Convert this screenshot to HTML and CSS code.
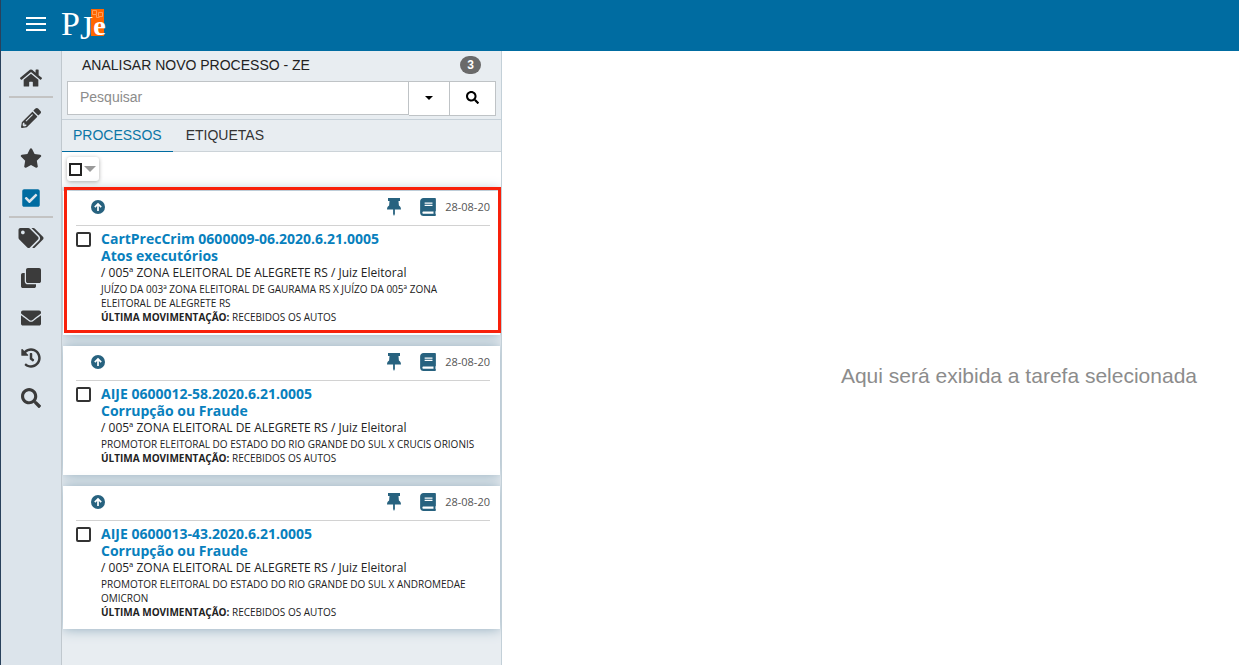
FILE: index.html
```html
<!DOCTYPE html>
<html lang="pt-BR">
<head>
<meta charset="utf-8">
<title>PJe</title>
<link rel="stylesheet" href="styles.css">
</head>
<body>
<svg class="sprite" aria-hidden="true">
  <symbol id="i-home" viewBox="0 0 576 512"><path d="M280.37 148.26L96 300.11V464a16 16 0 0 0 16 16l112.06-.29a16 16 0 0 0 15.92-16V368a16 16 0 0 1 16-16h64a16 16 0 0 1 16 16v95.64a16 16 0 0 0 16 16.05L464 480a16 16 0 0 0 16-16V300L295.67 148.26a12.19 12.19 0 0 0-15.3 0zM571.6 251.47L488 182.56V44.05a12 12 0 0 0-12-12h-56a12 12 0 0 0-12 12v72.61L318.47 43a48 48 0 0 0-61 0L4.34 251.47a12 12 0 0 0-1.6 16.9l25.5 31A12 12 0 0 0 45.15 301l235.22-193.74a12.19 12.19 0 0 1 15.3 0L530.9 301a12 12 0 0 0 16.9-1.6l25.5-31a12 12 0 0 0-1.7-16.93z"/></symbol>
  <symbol id="i-pencil" viewBox="0 0 512 512"><path d="M497.9 142.1l-46.1 46.1c-4.7 4.7-12.3 4.7-17 0l-111-111c-4.7-4.7-4.7-12.3 0-17l46.1-46.1c18.7-18.7 49.1-18.7 67.9 0l60.1 60.1c18.8 18.7 18.8 49.1 0 67.9zM284.2 99.8L21.6 362.4.4 483.9c-2.9 16.4 11.4 30.6 27.8 27.8l121.5-21.3 262.6-262.6c4.7-4.7 4.7-12.3 0-17l-111-111c-4.8-4.7-12.4-4.7-17.1 0zM124.1 339.9c-5.5-5.5-5.5-14.3 0-19.8l154-154c5.5-5.5 14.3-5.5 19.8 0s5.5 14.3 0 19.8l-154 154c-5.5 5.5-14.3 5.5-19.8 0zM88 424h48v36.3l-64.5 11.3-31.1-31.1L51.7 376H88v48z"/></symbol>
  <symbol id="i-star" viewBox="0 0 576 512"><path d="M259.3 17.8L194 150.2 47.9 171.5c-26.2 3.8-36.7 36.1-17.7 54.6l105.7 103-25 145.5c-4.5 26.3 23.2 46 46.4 33.7L288 439.6l130.7 68.7c23.2 12.2 50.9-7.4 46.4-33.7l-25-145.5 105.7-103c19-18.5 8.5-50.8-17.7-54.6L382 150.2 316.7 17.8c-11.7-23.6-45.6-23.9-57.4 0z"/></symbol>
  <symbol id="i-check" viewBox="0 0 448 512"><path d="M400 480H48c-26.51 0-48-21.49-48-48V80c0-26.51 21.49-48 48-48h352c26.51 0 48 21.49 48 48v352c0 26.51-21.49 48-48 48zm-204.686-98.059l184-184c6.248-6.248 6.248-16.379 0-22.627l-22.627-22.627c-6.248-6.248-16.379-6.249-22.628 0L184 302.745l-70.059-70.059c-6.248-6.248-16.379-6.248-22.628 0l-22.627 22.627c-6.248 6.248-6.248 16.379 0 22.627l104 104c6.249 6.249 16.379 6.249 22.628.001z"/></symbol>
  <symbol id="i-tags" viewBox="0 0 640 512"><path d="M497.941 225.941L286.059 14.059A48 48 0 0 0 252.118 0H48C21.49 0 0 21.49 0 48v204.118a48 48 0 0 0 14.059 33.941l211.882 211.882c18.744 18.745 49.136 18.746 67.882 0l204.118-204.118c18.745-18.745 18.745-49.137 0-67.882zM112 160c-26.51 0-48-21.49-48-48s21.49-48 48-48 48 21.49 48 48-21.49 48-48 48zm513.941 133.823L421.823 497.941c-18.745 18.745-49.137 18.745-67.882 0l-.36-.36L527.64 323.522c16.999-16.999 26.362-39.6 26.362-63.64s-9.362-46.641-26.362-63.64L331.397 0h48.721a48 48 0 0 1 33.941 14.059l211.882 211.882c18.745 18.745 18.745 49.137 0 67.882z"/></symbol>
  <symbol id="i-clone" viewBox="0 0 512 512"><path d="M464 0c26.51 0 48 21.49 48 48v288c0 26.51-21.49 48-48 48H176c-26.51 0-48-21.49-48-48V48c0-26.51 21.49-48 48-48h288M176 416c-44.112 0-80-35.888-80-80V128H48c-26.51 0-48 21.49-48 48v288c0 26.51 21.49 48 48 48h288c26.51 0 48-21.49 48-48v-48H176z"/></symbol>
  <symbol id="i-mail" viewBox="0 0 512 512"><path d="M502.3 190.8c3.9-3.1 9.7-.2 9.7 4.7V400c0 26.5-21.5 48-48 48H48c-26.5 0-48-21.5-48-48V195.6c0-5 5.7-7.8 9.7-4.7 22.4 17.4 52.1 39.5 154.1 113.6 21.1 15.4 56.7 47.8 92.2 47.6 35.7.3 72-32.8 92.3-47.6 102-74.1 131.6-96.3 154-113.7zM256 320c23.2.4 56.6-29.2 73.4-41.4 132.7-96.3 142.8-104.7 173.4-128.7 5.8-4.5 9.2-11.5 9.2-18.9v-19c0-26.5-21.5-48-48-48H48c-26.5 0-48 21.5-48 48v19c0 7.4 3.4 14.3 9.2 18.9 30.6 23.9 40.7 32.4 173.4 128.7 16.8 12.2 50.2 41.8 73.4 41.4z"/></symbol>
  <symbol id="i-history" viewBox="0 0 512 512"><path d="M504 255.531c.253 136.64-111.18 248.372-247.82 248.468-59.015.042-113.223-20.53-155.822-54.911-11.077-8.94-11.905-25.541-1.839-35.607l11.267-11.267c8.609-8.609 22.353-9.551 31.891-1.984C173.062 425.135 212.781 440 256 440c101.705 0 184-82.311 184-184 0-101.705-82.311-184-184-184-48.814 0-93.149 18.969-126.068 49.932l50.754 50.754c10.08 10.08 2.941 27.314-11.313 27.314H24c-8.837 0-16-7.163-16-16V38.627c0-14.254 17.234-21.393 27.314-11.314l49.372 49.372C129.209 34.136 189.552 8 256 8c136.81 0 247.747 110.78 248 247.531zm-180.912 78.784l9.823-12.63c8.138-10.463 6.253-25.542-4.21-33.679L288 256.349V152c0-13.255-10.745-24-24-24h-16c-13.255 0-24 10.745-24 24v135.651l65.409 50.874c10.463 8.137 25.541 6.253 33.679-4.21z"/></symbol>
  <symbol id="i-search" viewBox="0 0 512 512"><path d="M505 442.7L405.3 343c-4.5-4.5-10.6-7-17-7H372c27.6-35.3 44-79.7 44-128C416 93.1 322.9 0 208 0S0 93.1 0 208s93.1 208 208 208c48.3 0 92.7-16.4 128-44v16.3c0 6.4 2.5 12.5 7 17l99.7 99.7c9.4 9.4 24.6 9.4 33.9 0l28.3-28.3c9.4-9.4 9.4-24.6.1-34zM208 336c-70.7 0-128-57.2-128-128 0-70.7 57.2-128 128-128 70.7 0 128 57.2 128 128 0 70.7-57.2 128-128 128z"/></symbol>
  <symbol id="i-up" viewBox="0 0 14 14"><circle cx="7" cy="7" r="7"/><path d="M7 11V4M3.8 7.2L7 4l3.2 3.2" fill="none" stroke="#fff" stroke-width="1.7"/></symbol>
  <symbol id="i-pin" viewBox="0 0 14 18"><path d="M1 0h12v3h-1.500l.4 4.500c1.300.7 2.100 2 2.100 4H7.900V16L7 18l-.9-2v-4.500H0c0-2 .8-3.300 2.100-4L2.500 3H1z"/></symbol>
  <symbol id="i-book" viewBox="0 0 448 512"><path d="M448 360V24c0-13.300-10.700-24-24-24H96C43 0 0 43 0 96v320c0 53 43 96 96 96h328c13.300 0 24-10.700 24-24v-16c0-7.500-3.500-14.300-8.900-18.700-4.200-15.400-4.200-59.300 0-74.700 5.400-4.300 8.900-11.100 8.900-18.600zM128 134c0-3.300 2.700-6 6-6h212c3.300 0 6 2.700 6 6v20c0 3.300-2.700 6-6 6H134c-3.300 0-6-2.700-6-6v-20zm0 64c0-3.300 2.700-6 6-6h212c3.300 0 6 2.700 6 6v20c0 3.300-2.700 6-6 6H134c-3.300 0-6-2.700-6-6v-20zm253.400 250H96c-17.700 0-32-14.300-32-32 0-17.600 14.400-32 32-32h285.400c-1.900 17.100-1.900 46.900 0 64z"/></symbol>
</svg>

<header class="topbar">
  <button class="menu" aria-label="Menu"><svg width="20" height="14" viewBox="0 0 20 14"><path d="M0 1h20M0 7h20M0 13h20" stroke="#fff" stroke-width="2"/></svg></button>
  <svg class="logo" width="46" height="48" viewBox="0 0 46 48" role="img" aria-label="PJe">
    <rect x="30" y="9" width="13" height="27" fill="#f60"/>
    <path d="M31.500 10.500h4v4h-4zM37.500 12.500h4v4h-4zM35.500 14.500v3h3" fill="none" stroke="#ff9c55"/>
    <text class="logo-text" x="0" y="35">P<tspan dy="4">J</tspan><tspan class="logo-e" dy="-4">e</tspan></text>
  </svg>
</header>

<div class="app">
  <nav class="sidebar" aria-label="Principal">
    <a class="nav-item divided" href="#" aria-label="Início"><svg class="ico wide"><use href="#i-home"/></svg></a>
    <a class="nav-item" href="#" aria-label="Minutar"><svg class="ico"><use href="#i-pencil"/></svg></a>
    <a class="nav-item" href="#" aria-label="Favoritos"><svg class="ico wide"><use href="#i-star"/></svg></a>
    <a class="nav-item active divided" href="#" aria-label="Tarefas"><svg class="ico"><use href="#i-check"/></svg></a>
    <a class="nav-item" href="#" aria-label="Etiquetas"><svg class="ico widest"><use href="#i-tags"/></svg></a>
    <a class="nav-item" href="#" aria-label="Cópias"><svg class="ico"><use href="#i-clone"/></svg></a>
    <a class="nav-item" href="#" aria-label="Mensagens"><svg class="ico"><use href="#i-mail"/></svg></a>
    <a class="nav-item" href="#" aria-label="Histórico"><svg class="ico"><use href="#i-history"/></svg></a>
    <a class="nav-item" href="#" aria-label="Consulta"><svg class="ico"><use href="#i-search"/></svg></a>
  </nav>

  <section class="panel">
    <div class="panel-head">
      <div class="title-row"><h1 class="title">ANALISAR NOVO PROCESSO - ZE</h1><span class="badge">3</span></div>
      <form class="search">
        <input class="search-input" type="text" placeholder="Pesquisar" aria-label="Pesquisar">
        <button class="search-btn more" type="button" aria-label="Mais filtros"><span class="caret"></span></button>
        <button class="search-btn go" type="button" aria-label="Buscar"><svg width="13" height="13"><use href="#i-search"/></svg></button>
      </form>
    </div>
    <div class="tabs" role="tablist">
      <button class="tab selected" role="tab" aria-selected="true">PROCESSOS</button>
      <button class="tab" role="tab" aria-selected="false">ETIQUETAS</button>
    </div>
    <div class="toolbar">
      <div class="select-all"><input class="box small" type="checkbox" aria-label="Selecionar todos"><button class="drop" aria-label="Opções de seleção"></button></div>
    </div>

    <div class="list">
      <article class="card marked">
        <div class="card-top">
          <svg class="up"><use href="#i-up"/></svg>
          <svg class="pin"><use href="#i-pin"/></svg>
          <svg class="book"><use href="#i-book"/></svg>
          <time class="date">28-08-20</time>
        </div>
        <div class="card-body">
          <input class="box" type="checkbox" id="p1">
          <div class="info">
            <label class="number" for="p1">CartPrecCrim 0600009-06.2020.6.21.0005<br>Atos executórios</label>
            <p class="court">/ 005ª ZONA ELEITORAL DE ALEGRETE RS / Juiz Eleitoral</p>
            <p class="small-text">JUÍZO DA 003ª ZONA ELEITORAL DE GAURAMA RS X JUÍZO DA 005ª ZONA ELEITORAL DE ALEGRETE RS</p>
            <p class="small-text"><b>ÚLTIMA MOVIMENTAÇÃO:</b> RECEBIDOS OS AUTOS</p>
          </div>
        </div>
      </article>
      <article class="card">
        <div class="card-top">
          <svg class="up"><use href="#i-up"/></svg>
          <svg class="pin"><use href="#i-pin"/></svg>
          <svg class="book"><use href="#i-book"/></svg>
          <time class="date">28-08-20</time>
        </div>
        <div class="card-body">
          <input class="box" type="checkbox" id="p2">
          <div class="info">
            <label class="number" for="p2">AIJE 0600012-58.2020.6.21.0005<br>Corrupção ou Fraude</label>
            <p class="court">/ 005ª ZONA ELEITORAL DE ALEGRETE RS / Juiz Eleitoral</p>
            <p class="small-text">PROMOTOR ELEITORAL DO ESTADO DO RIO GRANDE DO SUL X CRUCIS ORIONIS</p>
            <p class="small-text"><b>ÚLTIMA MOVIMENTAÇÃO:</b> RECEBIDOS OS AUTOS</p>
          </div>
        </div>
      </article>
      <article class="card">
        <div class="card-top">
          <svg class="up"><use href="#i-up"/></svg>
          <svg class="pin"><use href="#i-pin"/></svg>
          <svg class="book"><use href="#i-book"/></svg>
          <time class="date">28-08-20</time>
        </div>
        <div class="card-body">
          <input class="box" type="checkbox" id="p3">
          <div class="info">
            <label class="number" for="p3">AIJE 0600013-43.2020.6.21.0005<br>Corrupção ou Fraude</label>
            <p class="court">/ 005ª ZONA ELEITORAL DE ALEGRETE RS / Juiz Eleitoral</p>
            <p class="small-text">PROMOTOR ELEITORAL DO ESTADO DO RIO GRANDE DO SUL X ANDROMEDAE OMICRON</p>
            <p class="small-text"><b>ÚLTIMA MOVIMENTAÇÃO:</b> RECEBIDOS OS AUTOS</p>
          </div>
        </div>
      </article>
    </div>
  </section>

  <main class="content"><p class="empty">Aqui será exibida a tarefa selecionada</p></main>
</div>
</body>
</html>
```
FILE: styles.css
```css
* { box-sizing: border-box; }
body {
  margin: 0;
  min-height: 100vh;
  display: flex;
  flex-direction: column;
  border-left: 1px solid #29415c;
  font-family: "Liberation Sans", Arial, sans-serif;
  font-size: 14px;
  color: #222;
  background: #fff;
}
h1, p { margin: 0; }
button { font: inherit; border: 0; padding: 0; background: none; cursor: pointer; }
.sprite { display: none; }

.topbar {
  height: 51px;
  padding: 0 0 3px 25px;
  display: flex;
  align-items: center;
  gap: 15px;
  background: #006ca1;
}
.menu { display: flex; }
.logo-text { font: 34px "Liberation Serif", serif; fill: #fff; }
.logo-e { font-size: 28px; font-weight: 700; }

.app { flex: 1; display: flex; }
.sidebar {
  width: 61px;
  flex: none;
  padding: 7px 8px 0;
  background: #dce4eb;
  border-right: 1px solid #c0c8ce;
}
.nav-item {
  height: 40px;
  display: flex;
  align-items: center;
  justify-content: center;
  color: #3b3b3b;
}
.nav-item.active { color: #006ca1; }
.divided { box-shadow: inset 0 -2px #c3c3c3; }
.ico { width: 20px; height: 20px; fill: currentColor; }
.wide { width: 22px; }
.widest { width: 26px; }

.panel {
  width: 440px;
  flex: none;
  overflow: hidden;
  background: #e8edf1;
  border-right: 1px solid #c3d0d8;
}
.panel-head { padding: 0 5px 3px; border-bottom: 1px solid #c6d0d8; }
.title-row {
  height: 30px;
  padding: 0 15px 2px;
  display: flex;
  align-items: center;
  justify-content: space-between;
}
.title { font-size: 14px; font-weight: 400; }
.badge {
  padding: 0 7px;
  border-radius: 9px;
  background: #6a6a6a;
  color: #fff;
  font-size: 12px;
  font-weight: 700;
  line-height: 18px;
}
.search { display: flex; }
.search-input {
  flex: 1;
  min-width: 0;
  height: 34px;
  padding: 0 12px 2px;
  border: 1px solid #bfc3c6;
  background: #fff;
  font: inherit;
}
.search-input::placeholder { color: #8c8c8c; opacity: 1; }
.search-btn {
  height: 35px;
  padding-bottom: 2px;
  display: flex;
  align-items: center;
  justify-content: center;
  background: #fff;
  border: 1px solid #bfc3c6;
  border-left: 0;
}
.more { width: 41px; }
.go { width: 46px; }
.caret { border: 4px solid transparent; border-top-color: #000; border-bottom: 0; }

.tabs { height: 32px; display: flex; gap: 2px; border-bottom: 1px solid #ccd3d8; }
.tab { height: 32px; padding: 0 11px 2px; color: #333; }
.selected { color: #0b76a6; border-bottom: 1px solid #006ca1; }

.toolbar { padding: 5px 5px 6px; background: #fff; }
.select-all {
  display: inline-flex;
  align-items: center;
  gap: 2px;
  height: 24px;
  padding: 0 3px 0 2px;
  border-radius: 3px;
  background: #fff;
  box-shadow: 0 1px 4px #0005;
  vertical-align: top;
}
.drop {
  border: 6px solid transparent;
  border-top-color: #999;
  border-bottom: 0;
}
.box {
  appearance: none;
  flex: none;
  width: 15px;
  height: 15px;
  margin: 0;
  border: 2px solid #333;
  border-radius: 2px;
  background: #fff;
}
.small { width: 13px; height: 13px; border-color: #222; border-radius: 0; }

.list {
  padding: 4px 1px 0;
  display: flex;
  flex-direction: column;
  gap: 11px;
}
.card {
  position: relative;
  padding: 0 10px 10px 13px;
  background: #fff;
  box-shadow: 0 0 12px #8faabb;
}
.marked { padding-bottom: 11px; }
.marked::after {
  content: "";
  position: absolute;
  inset: -4px -1px 2px 1px;
  border: 3px solid #f8200a;
}
.card-top {
  height: 35px;
  padding: 0 0 2px 15px;
  display: flex;
  align-items: center;
  border-bottom: 1px solid #d2d2d2;
}
.card-top svg { fill: #27627f; }
.up { width: 14px; height: 14px; margin-right: auto; }
.pin { width: 14px; height: 18px; }
.book { width: 16px; height: 18px; margin: 0 9px 0 19px; }
.date { padding-bottom: 2px; font: 11px "Open Sans", sans-serif; color: #555; }
.card-body {
  padding-top: 4px;
  display: flex;
  gap: 10px;
  font-family: "Open Sans", sans-serif;
}
.card-body .box { margin-top: 2px; }
.info { flex: 1; min-width: 0; padding-right: 8px; }
.number { display: block; font-size: 14px; font-weight: 700; line-height: 17px; color: #0880bd; }
.court { font-size: 12px; line-height: 18px; }
.small-text { font-size: 10px; line-height: 14px; }

.content { flex: 1; display: flex; align-items: center; justify-content: flex-end; padding: 36px 42px 0 0; }
.empty { font-size: 21px; color: #8c8c8c; }
```
